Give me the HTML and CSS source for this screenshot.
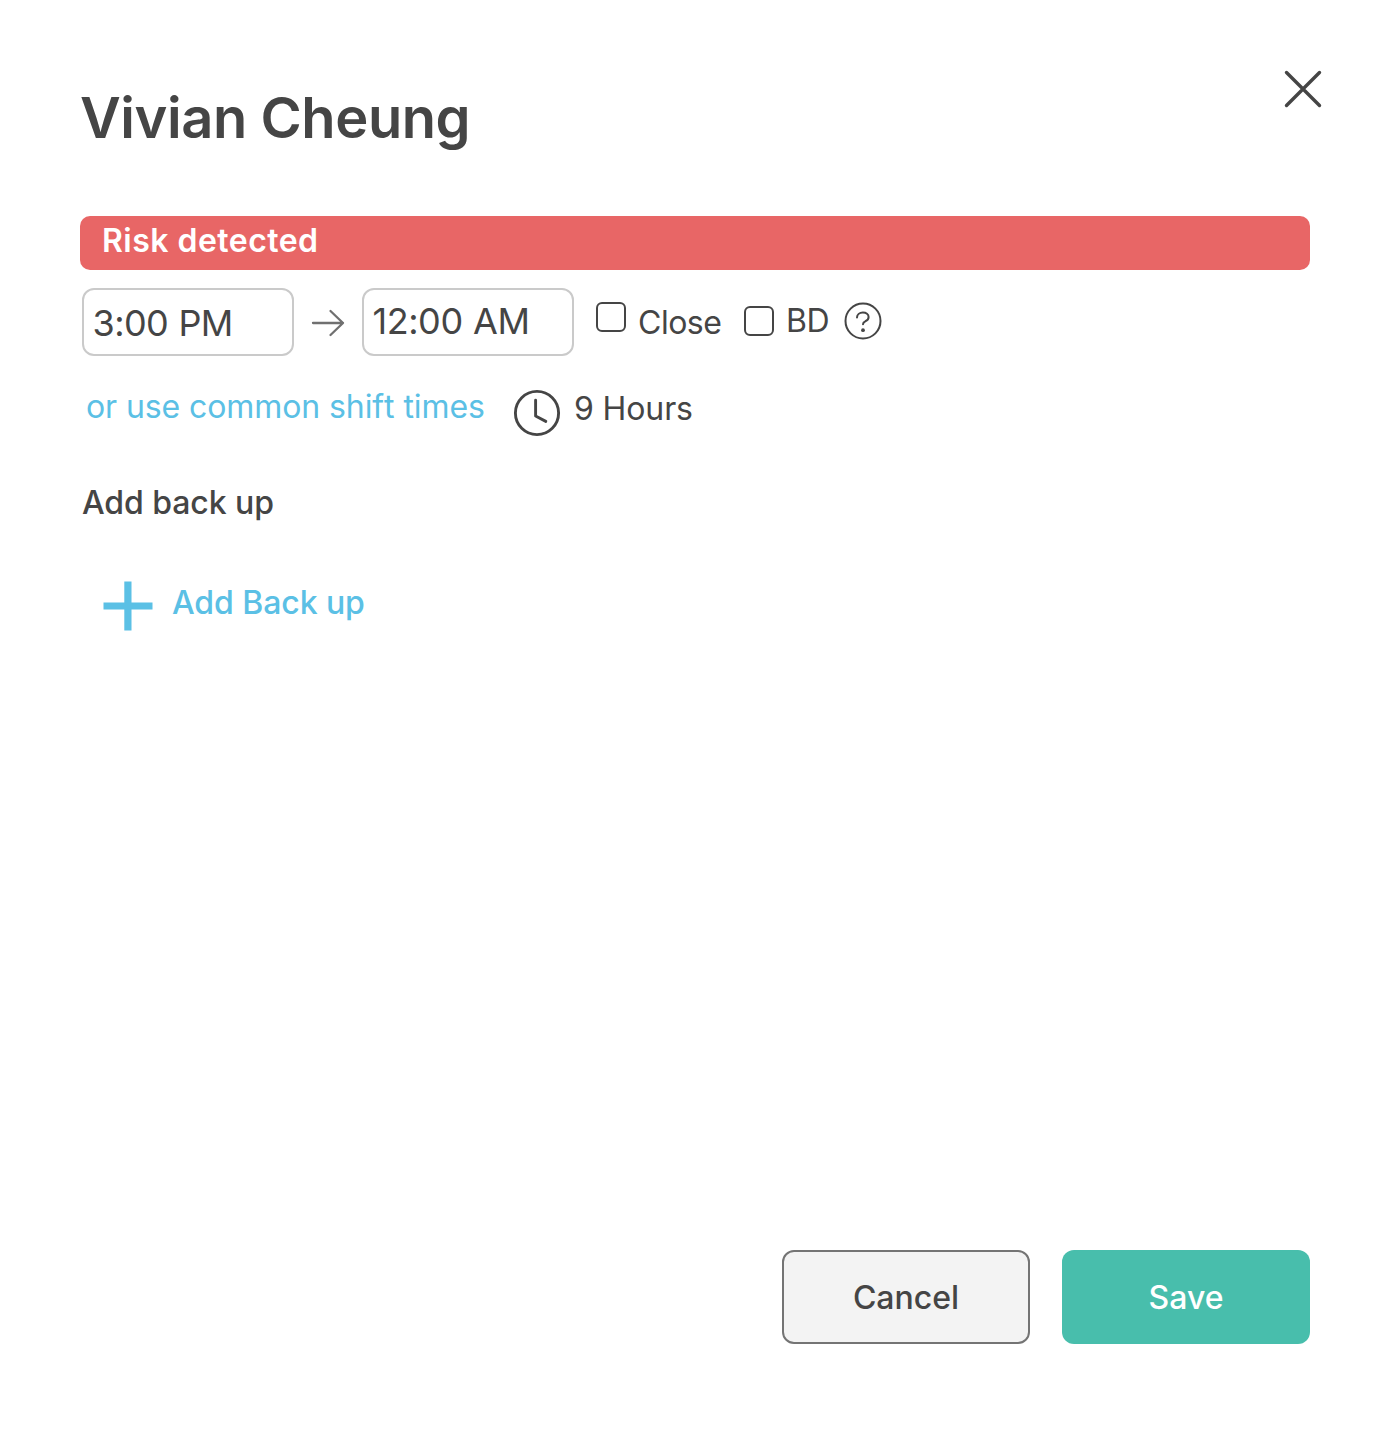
FILE: index.html
```html
<!DOCTYPE html>
<html lang="en">
<head>
<meta charset="utf-8">
<title>Edit shift</title>
<link rel="stylesheet" href="styles.css">
</head>
<body>
<main class="dialog">
  <header class="header">
    <h1 class="title">Vivian Cheung</h1>
    <button class="close" aria-label="Close dialog">
      <svg width="40" height="40" viewBox="0 0 40 40" fill="none" stroke="currentColor" stroke-width="3.4" stroke-linecap="round"><path d="M3.500 3.500l33 33M36.500 3.500l-33 33"/></svg>
    </button>
  </header>
  <div class="alert"><span class="alert-text">Risk detected</span></div>
  <section class="times">
    <div class="field field-start"><span class="start-text">3:00 PM</span></div>
    <svg class="arrow" width="34" height="28" viewBox="0 0 34 28" fill="none" stroke="currentColor" stroke-width="2.3" stroke-linecap="round" stroke-linejoin="round"><path d="M2 14h30M19.500 2L32 14L19.500 26"/></svg>
    <div class="field field-end"><span class="end-text">12:00 AM</span></div>
    <label class="option option-close"><span class="box"></span><span class="close-text">Close</span></label>
    <label class="option option-bd"><span class="box"></span><span class="bd-text">BD</span></label>
    <svg class="help" width="38" height="38" viewBox="0 0 38 38" fill="none" stroke="currentColor" stroke-width="2"><circle cx="19" cy="19" r="17.500"/><path d="M13 15.600C13 12.600 15.500 10.500 18.900 10.500C22.200 10.500 24.600 12.300 24.600 15C24.600 17.400 23.300 18.500 21.300 19.300C19.500 20.100 19 20.700 19 22.200" stroke-linecap="round"/><circle cx="19" cy="28.200" r="1.900" fill="currentColor" stroke="none"/></svg>
  </section>
  <section class="summary">
    <a class="common">or use common shift times</a>
    <svg class="clock" width="48" height="48" viewBox="0 0 48 48" fill="none" stroke="currentColor" stroke-width="2.900" stroke-linecap="round" stroke-linejoin="round"><circle cx="24" cy="24" r="21.600"/><path d="M22.600 11.200V27L32.800 32.400"/></svg>
    <span class="hours">9 Hours</span>
  </section>
  <h2 class="subtitle">Add back up</h2>
  <button class="add">
    <svg class="plus" width="50" height="50" viewBox="0 0 50 50" fill="currentColor"><path d="M21.300 .5h7.200v20.900h21v7.200h-21v21h-7.200v-21H.5v-7.200h20.800z"/></svg>
    <span class="add-text">Add Back up</span>
  </button>
  <footer class="actions">
    <button class="button cancel"><span class="cancel-text">Cancel</span></button>
    <button class="button save"><span class="save-text">Save</span></button>
  </footer>
</main>
</body>
</html>
```
FILE: styles.css
```css
* { box-sizing: border-box; }
body { margin: 0; background: #fff; }
.dialog {
  display: flex;
  flex-direction: column;
  height: 1442px;
  padding: 69px 84px 98px 80px;
  color: #454545;
  font: 400 32px/42px Inter, "Liberation Sans", sans-serif;
  white-space: nowrap;
}
button { padding: 0; border: 0; background: none; color: inherit; font: inherit; }
svg { display: block; flex: none; }
.header { display: flex; justify-content: space-between; align-items: flex-start; height: 147px; }
.title { margin: 15px 0 0; font-size: 56px; line-height: 68px; font-weight: 600; letter-spacing: -.42px; }
.close { margin-right: -13px; }
.alert { height: 54px; padding: 4px 22px; border-radius: 10px; background: #e86666; color: #fff; font-weight: 600; letter-spacing: .47px; }
.times { display: flex; align-items: flex-start; height: 68px; margin: 18px 0 0 2px; }
.field { width: 212px; height: 68px; padding: 11px 8.5px; border: 2px solid #cacaca; border-radius: 12px; font-size: 36px; line-height: 44px; letter-spacing: -.6px; word-spacing: .8px; }
.field-end { padding-top: 9px; letter-spacing: -.45px; }
.arrow { margin: 21px 17px 0; color: #707070; }
.option { display: flex; align-items: flex-start; gap: 12px; letter-spacing: -.5px; }
.box { flex: none; width: 30px; height: 30px; border: 2px solid #454545; border-radius: 6px; }
.option-close { margin: 14px 0 0 22px; width: 148px; }
.option-bd { margin-top: 18px; width: 100px; }
.bd-text { margin-top: -6px; }
.help { margin-top: 14px; }
.summary { display: flex; align-items: flex-start; height: 66px; margin: 30px 0 0 6px; }
.common { width: 427px; color: #5bc0e5; letter-spacing: -.09px; font-kerning: none; }
.clock { margin-top: 3px; }
.hours { margin: 2px 0 0 13px; letter-spacing: -.12px; }
.subtitle { margin: 30px 0 0 2px; font-size: 32px; line-height: 42px; font-weight: 500; letter-spacing: -.08px; }
.add { display: flex; align-items: flex-start; margin: 57px 0 0 23px; color: #5bc0e5; font-weight: 500; letter-spacing: -.08px; }
.add-text { margin: 1px 0 0 19px; }
.actions { display: flex; justify-content: flex-end; gap: 32px; margin-top: auto; }
.button { width: 248px; height: 94px; padding-top: 2px; border-radius: 12px; font-weight: 500; }
.cancel { border: 2px solid #747474; background: #f3f3f3; }
.save { background: #48beac; color: #fff; }
```
